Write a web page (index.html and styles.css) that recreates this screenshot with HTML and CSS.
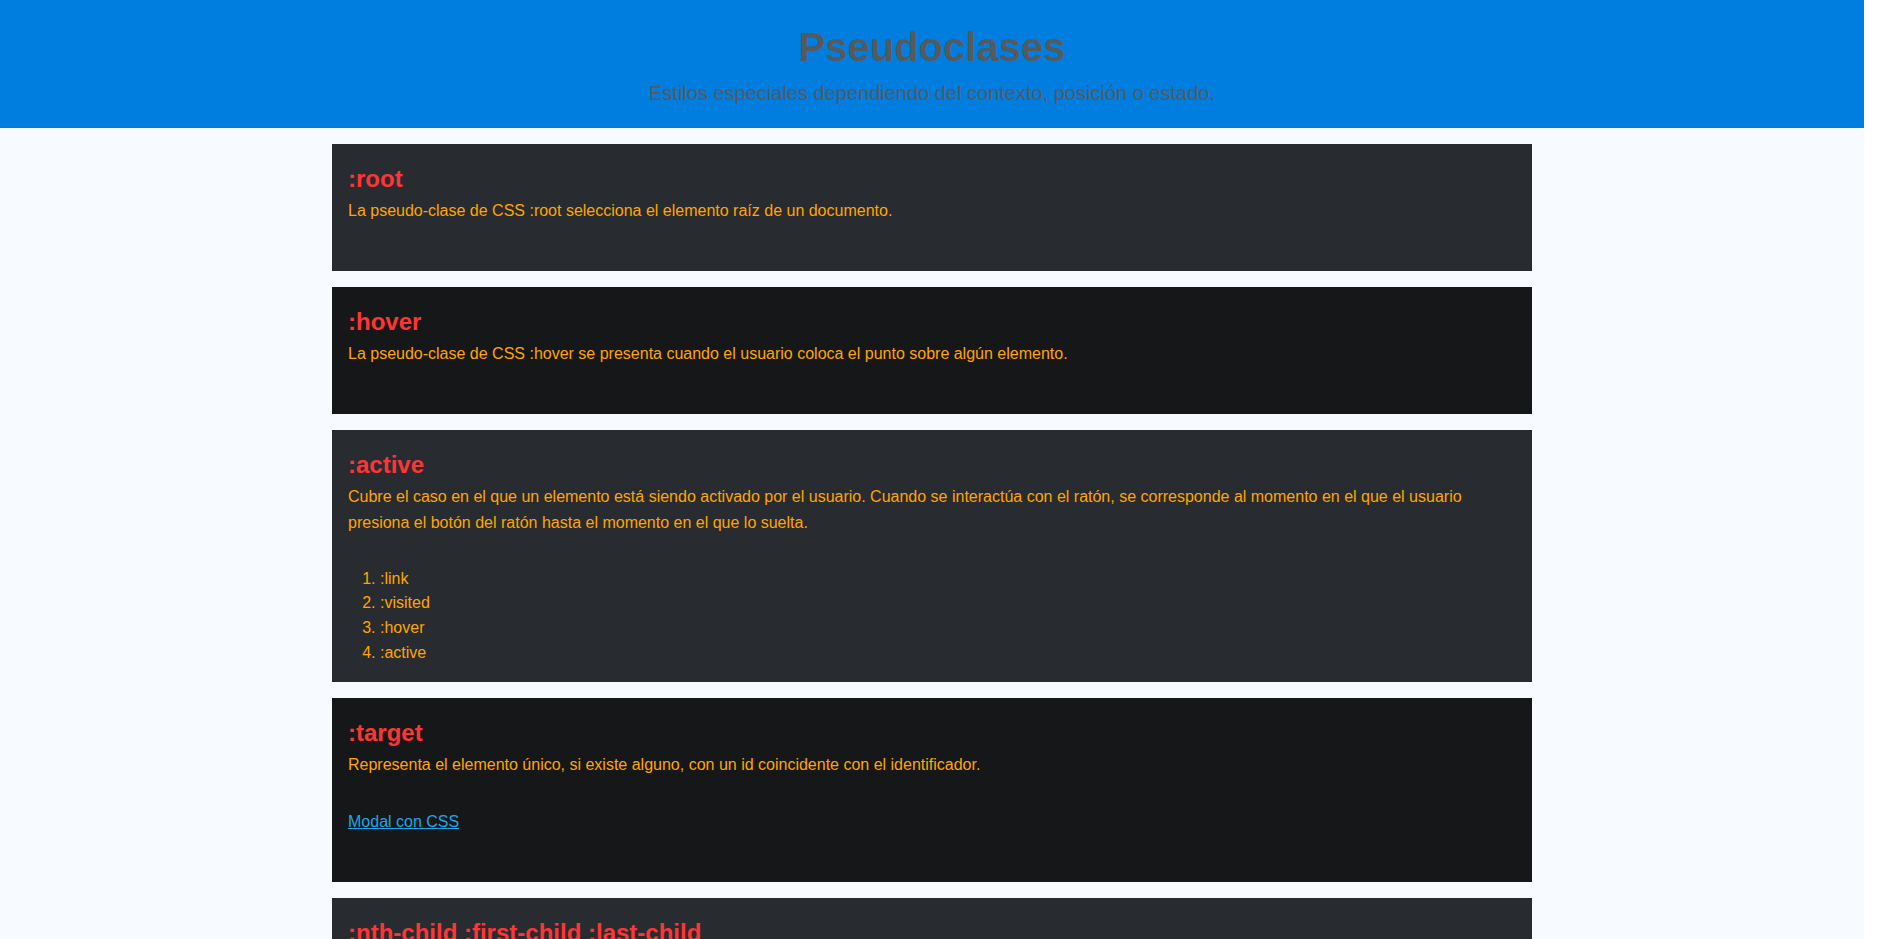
FILE: index.html
```html
<!DOCTYPE html>
<html lang="es">
<head>
<meta charset="utf-8">
<title>Pseudoclases</title>
<link rel="stylesheet" href="styles.css">
</head>
<body>
<div class="page">
  <header class="hero">
    <h1 class="hero-title">Pseudoclases</h1>
    <p class="hero-sub">Estilos especiales dependiendo del contexto, posición o estado.</p>
  </header>
  <main class="list">
    <section class="card card-light">
      <h2 class="card-title">:root</h2>
      <p class="card-text">La pseudo-clase de CSS :root selecciona el elemento raíz de un documento.</p>
      <div class="demo"></div>
    </section>
    <section class="card card-dark">
      <h2 class="card-title">:hover</h2>
      <p class="card-text">La pseudo-clase de CSS :hover se presenta cuando el usuario coloca el punto sobre algún elemento.</p>
      <div class="demo"></div>
    </section>
    <section class="card card-light">
      <h2 class="card-title">:active</h2>
      <p class="card-text">Cubre el caso en el que un elemento está siendo activado por el usuario. Cuando se interactúa con el ratón, se corresponde al momento en el que el usuario presiona el botón del ratón hasta el momento en el que lo suelta.</p>
      <div class="demo">
        <ol class="steps">
          <li>:link</li>
          <li>:visited</li>
          <li>:hover</li>
          <li>:active</li>
        </ol>
      </div>
    </section>
    <section class="card card-dark">
      <h2 class="card-title">:target</h2>
      <p class="card-text">Representa el elemento único, si existe alguno, con un id coincidente con el identificador.</p>
      <div class="demo">
        <p class="demo-link-row"><a class="demo-link" href="#modal">Modal con CSS</a></p>
      </div>
    </section>
    <section class="card card-light">
      <h2 class="card-title">:nth-child :first-child :last-child</h2>
      <div class="demo"></div>
    </section>
  </main>
</div>
</body>
</html>
```

FILE: styles.css
```css
html {
  background: #ffffff;
}

body {
  margin: 0 15px 0 0;
  font-family: "Liberation Sans", Arial, sans-serif;
}

.page {
  background: #f7fbff;
  min-height: 100vh;
  padding-bottom: 16px;
}

.hero {
  background: #007ee0;
  height: 128px;
  box-sizing: border-box;
  padding: 25px 0 0;
  text-align: center;
  color: #555a5f;
}

.hero-title {
  margin: 0 0 12px;
  font-size: 40px;
  font-weight: 700;
  line-height: normal;
}

.hero-sub {
  margin: 0;
  font-size: 20px;
  line-height: normal;
}

.list {
  width: 1200px;
  margin: 16px auto 0;
  display: flex;
  flex-direction: column;
  gap: 16px;
}

.card {
  padding: 16px;
  display: flex;
  flex-direction: column;
  color: #ffa500;
  font-size: 16px;
  line-height: 1.6;
}

.card-light {
  background: #282c31;
}

.card-dark {
  background: #161719;
}

.card-title {
  margin: 0;
  font-size: 24px;
  font-weight: 700;
  line-height: 1.6;
  color: #ff3535;
}

.card-text {
  margin: 0;
}

.demo {
  margin-top: 31px;
}

.steps {
  margin: 0;
  padding-left: 32px;
  line-height: 1.55;
}

.demo-link-row {
  margin: 0 0 32px;
}

.demo-link {
  color: #1ea6e8;
  text-decoration: underline;
}
```
